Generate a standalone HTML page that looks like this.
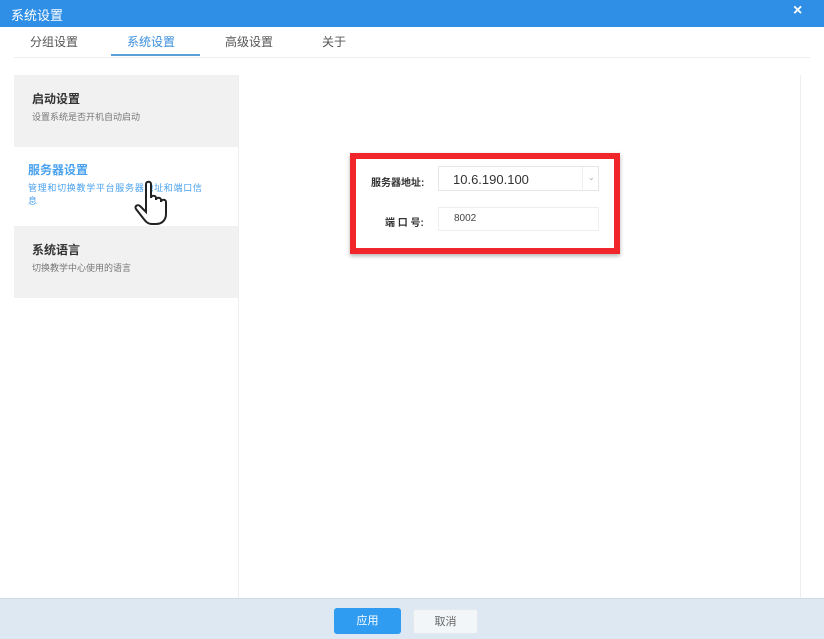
<!DOCTYPE html>
<html><head><meta charset="utf-8"><style>
*{margin:0;padding:0;box-sizing:border-box}
body{width:824px;height:639px;overflow:hidden;background:#fff;font-family:"Liberation Sans","Noto Sans CJK SC",sans-serif;position:relative}
.a{position:absolute}
</style></head><body>
<div class="a" style="left:0;top:0;width:824px;height:27px;background:#2f8fe6"></div>
<div class="a" style="left:11px;top:5px;color:#fff;font-size:13px">系统设置</div>
<div class="a" style="left:793px;top:2px;color:#fff;font-size:16px;font-weight:bold">×</div>
<div class="a" style="left:30px;top:33px;font-size:12px;color:#555">分组设置</div>
<div class="a" style="left:127px;top:33px;font-size:12px;color:#3a8fdc">系统设置</div>
<div class="a" style="left:225px;top:33px;font-size:12px;color:#555">高级设置</div>
<div class="a" style="left:322px;top:33px;font-size:12px;color:#555">关于</div>
<div class="a" style="left:111px;top:54px;width:89px;height:2px;background:#5a9fd8"></div>
<div class="a" style="left:14px;top:57px;width:796px;height:1px;background:#eee"></div>
<div class="a" style="left:238px;top:75px;width:563px;height:523px;border-left:1px solid #eee;border-right:1px solid #eee"></div>
<div class="a" style="left:14px;top:75px;width:224px;height:72px;background:#f1f1f1"></div>
<div class="a" style="left:32px;top:90px;font-size:12px;font-weight:bold;color:#333">启动设置</div>
<div class="a" style="left:32px;top:110px;font-size:9px;color:#777">设置系统是否开机自动启动</div>
<div class="a" style="left:28px;top:161px;font-size:12px;font-weight:bold;color:#4aa2ef">服务器设置</div>
<div class="a" style="left:28px;top:182px;font-size:9px;color:#4aa2ef;width:180px;line-height:13px;letter-spacing:0.7px">管理和切换教学平台服务器地址和端口信息</div>
<div class="a" style="left:14px;top:226px;width:224px;height:72px;background:#f1f1f1"></div>
<div class="a" style="left:32px;top:241px;font-size:12px;font-weight:bold;color:#333">系统语言</div>
<div class="a" style="left:32px;top:261px;font-size:9px;color:#777">切换教学中心使用的语言</div>
<svg class="a" style="left:132px;top:178px" width="48" height="52" viewBox="0 0 48 52"><path d="M14 6c0-3 5-3 5 0v14c0-3 5-3 5 0v2c0-3 5-3 5 0v2c0-3 5-3 5 0v12c0 6-4 10-10 10h-4c-4 0-6-2-9-6l-7-9c-2-3 2-5 4-3l6 6V6z" fill="#fff" stroke="#222" stroke-width="2"/></svg>
<div class="a" style="left:350px;top:153px;width:270px;height:101px;border:6px solid #f0262b;box-shadow:0 2px 4px rgba(0,0,0,.3)"></div>
<div class="a" style="left:371px;top:174px;font-size:10px;color:#333;font-weight:bold">服务器地址:</div>
<div class="a" style="left:438px;top:166px;width:161px;height:25px;border:1px solid #e6e6e6"></div>
<div class="a" style="left:582px;top:167px;width:1px;height:23px;background:#eee"></div>
<div class="a" style="left:588px;top:173px;font-size:8px;color:#aaa">⌄</div>
<div class="a" style="left:453px;top:172px;font-size:13px;color:#333">10.6.190.100</div>
<div class="a" style="left:385px;top:214px;font-size:10px;color:#333;font-weight:bold">端 口 号:</div>
<div class="a" style="left:438px;top:207px;width:161px;height:24px;border:1px solid #eee"></div>
<div class="a" style="left:454px;top:213px;font-size:10px;color:#444">8002</div>
<div class="a" style="left:0;top:598px;width:824px;height:41px;background:#dde8f2;border-top:1px solid #cfdbe6"></div>
<div class="a" style="left:334px;top:608px;width:67px;height:26px;background:#2f9cf2;border-radius:3px;color:#fff;font-size:11px;text-align:center;line-height:26px">应用</div>
<div class="a" style="left:413px;top:609px;width:65px;height:25px;background:#f3f6f9;border:1px solid #e4e9ee;border-radius:3px;color:#666;font-size:11px;text-align:center;line-height:24px">取消</div>
</body></html>
